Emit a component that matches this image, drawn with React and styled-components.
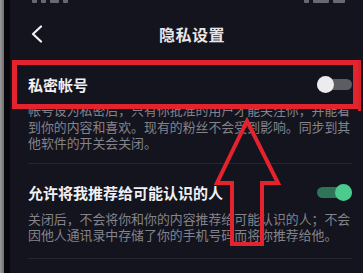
import React from "react";
import styled, { createGlobalStyle } from "styled-components";

const GlobalStyle = createGlobalStyle`
  html, body {
    margin: 0;
    padding: 0;
    background: #14141e;
  }
  body {
    font-family: "Noto Sans CJK SC", "Noto Sans", sans-serif;
  }
`;

function Toggle({ on }) {
  return (
    <Track on={on ? 1 : 0}>
      <Knob on={on ? 1 : 0} />
    </Track>
  );
}

function Chevron() {
  return (
    <svg width="12" height="18" viewBox="0 0 12 18">
      <polyline
        points="10,1.5 2,9 10,16.5"
        fill="none"
        stroke="#f2f2f4"
        strokeWidth="2.2"
        strokeLinecap="round"
        strokeLinejoin="round"
      />
    </svg>
  );
}

function UpArrow() {
  return (
    <ArrowSvg width="70" height="132" viewBox="0 0 70 132">
      <polygon
        points="33,4 64,66 48,66 48,127 18,127 18,66 3,66"
        fill="none"
        stroke="#e3232d"
        strokeWidth="4"
        strokeLinejoin="miter"
      />
    </ArrowSvg>
  );
}

export default function App() {
  return (
    <>
      <GlobalStyle />
      <Screen>
        <Bezel />
        <Edge />
        <Main>
          <StatusBar>
            <StatusGroup>
              <StatusBit w={5} />
              <StatusBit w={5} />
              <StatusBit w={9} />
              <StatusBit w={5} />
            </StatusGroup>
            <StatusGroup>
              <StatusBit w={5} />
              <StatusBit w={16} />
              <StatusBit w={12} />
            </StatusGroup>
          </StatusBar>

          <NavBar>
            <Chevron />
            <Title>隐私设置</Title>
          </NavBar>

          <Row pt={4} h={36}>
            <Label>私密帐号</Label>
            <Toggle />
          </Row>
          <Desc>
            帐号设为私密后，只有你批准的用户才能关注你，并能看到你的内容和喜欢。现有的粉丝不会受到影响。同步到其他软件的开关会关闭。
          </Desc>
          <Divider mt={11} />

          <Row pt={14} h={30}>
            <Label>允许将我推荐给可能认识的人</Label>
            <Toggle on />
          </Row>
          <Desc mt={3}>
            关闭后，不会将你和你的内容推荐给可能认识的人；不会因他人通讯录中存储了你的手机号码而将你推荐给他。
          </Desc>
          <Divider mt={14} />
        </Main>

        <Highlight />
        <UpArrow />
      </Screen>
    </>
  );
}

const Screen = styled.div`
  position: relative;
  display: flex;
  width: 363px;
  height: 273px;
  overflow: hidden;
  background: #14141e;
`;

const Bezel = styled.div`
  width: 4px;
  flex-shrink: 0;
  background: linear-gradient(90deg, #9a9a9c, #6e6e72);
`;

const Edge = styled.div`
  width: 6px;
  flex-shrink: 0;
  background: #08080c;
`;

const Main = styled.div`
  flex: 1;
  display: flex;
  flex-direction: column;
  min-width: 0;
`;

const StatusBar = styled.div`
  height: 6px;
  display: flex;
  justify-content: space-between;
  align-items: flex-start;
  padding: 0 18px 0 22px;
  overflow: hidden;
`;

const StatusGroup = styled.div`
  display: flex;
  gap: 4px;
`;

const StatusBit = styled.div`
  width: ${(p) => p.w}px;
  height: 3px;
  border-radius: 0 0 1px 1px;
  background: #8c8c94;
  opacity: 0.7;
`;

const NavBar = styled.div`
  height: 56px;
  display: flex;
  align-items: center;
  padding: 0 22px 0 21px;
`;

const Title = styled.div`
  flex: 1;
  text-align: center;
  font-size: 16px;
  font-weight: 700;
  color: #e6e6ea;
  letter-spacing: 0.5px;
`;

const Row = styled.div`
  display: flex;
  align-items: center;
  justify-content: space-between;
  height: ${(p) => p.h}px;
  padding: ${(p) => p.pt}px 11px 0 18px;
`;

const Label = styled.div`
  font-size: 15px;
  font-weight: 700;
  color: #f0f0f3;
  letter-spacing: 0;
`;

const Track = styled.div`
  position: relative;
  width: 35px;
  height: 11px;
  border-radius: 6px;
  background: ${(p) => (p.on ? "#2e7456" : "#5c5c63")};
`;

const Knob = styled.div`
  position: absolute;
  top: 50%;
  ${(p) => (p.on ? "right: 0;" : "left: 0;")}
  width: 17px;
  height: 17px;
  margin-top: -8.5px;
  border-radius: 50%;
  background: ${(p) => (p.on ? "#4ccb8f" : "#ececef")};
`;

const Desc = styled.div`
  margin-top: ${(p) => p.mt || 0}px;
  padding: 0 10px 0 18px;
  font-size: 12.9px;
  line-height: 16.5px;
  color: #83838b;
`;

const Divider = styled.div`
  margin: ${(p) => p.mt}px 11px 0 18px;
  height: 1px;
  background: #262632;
`;

const Highlight = styled.div`
  position: absolute;
  left: 12px;
  top: 60px;
  width: 346px;
  height: 49px;
  box-sizing: border-box;
  border: 5px solid #e3232d;
  pointer-events: none;

  &::after {
    content: "";
    position: absolute;
    top: -5px;
    right: -8px;
    width: 3px;
    height: 51px;
    background: #d8222b;
  }
`;

const ArrowSvg = styled.svg`
  position: absolute;
  left: 214px;
  top: 117px;
  pointer-events: none;
`;
